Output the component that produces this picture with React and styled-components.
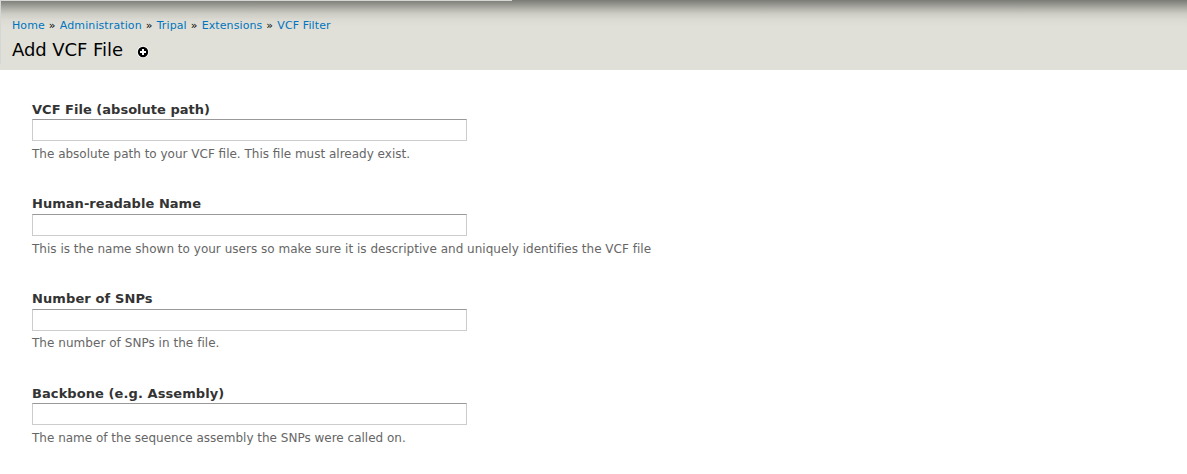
import React from "react";
import styled, { createGlobalStyle } from "styled-components";

const Global = createGlobalStyle`
  body { margin: 0; background: #fff; font-family: "DejaVu Sans", sans-serif; overflow: hidden; }
`;

const Header = styled.header`
  position: relative;
  height: 70px;
  box-sizing: border-box;
  padding: 18px 12px 0;
  background: linear-gradient(to bottom, #7b7b76 0, #93938d 4px, #b3b3ac 9px, #cdcdc6 14px, #dbdbd3 20px, #e0e0d8 27px);

  &::before {
    content: "";
    position: absolute;
    top: 0;
    left: 0;
    width: 511px;
    height: 63px;
    border: solid #d6d6d4;
    border-width: 1px 0 0 1px;
  }
`;

const Crumbs = styled.nav`
  position: relative;
  font-size: 11px;
  line-height: 16px;
  letter-spacing: 0.4px;
  white-space: pre;
  color: #000;
`;

const Crumb = styled.a`
  letter-spacing: 0.1px;
  color: #0074bd;
`;

const TitleRow = styled.div`
  display: flex;
  align-items: center;
  gap: 14px;
  margin-top: 4px;
`;

const Title = styled.h1`
  margin: 0;
  font-size: 18px;
  font-weight: normal;
  line-height: 24px;
  letter-spacing: -0.06px;
  color: #000;
`;

const AddIcon = styled.svg`
  display: block;
  margin-top: 3px;
`;

const Form = styled.form`
  display: flex;
  flex-direction: column;
  padding: 29.65px 32px 0;
`;

const Field = styled.div`
  display: flex;
  flex-direction: column;
  height: 94.67px;
`;

const Label = styled.label`
  margin-bottom: 0.7px;
  font-size: 13px;
  font-weight: bold;
  line-height: 19px;
  letter-spacing: ${(p) => p.$tracking}px;
  color: #333;
`;

const Input = styled.input`
  box-sizing: border-box;
  width: 435px;
  height: 22px;
  padding: 2px;
  border: 1px solid #ccc;
  border-top-color: #999;
  background: #fff;
`;

const Help = styled.div`
  margin-top: 2.65px;
  font-size: 12px;
  line-height: 20px;
  letter-spacing: ${(p) => p.$tracking}px;
  color: #666;
`;

const trail = ["Home", "Administration", "Tripal", "Extensions", "VCF Filter"];

const fields = [
  { label: "VCF File (absolute path)", help: "The absolute path to your VCF file. This file must already exist.", labelTracking: 0.02, helpTracking: 0 },
  { label: "Human-readable Name", help: "This is the name shown to your users so make sure it is descriptive and uniquely identifies the VCF file", labelTracking: 0.04, helpTracking: 0.015 },
  { label: "Number of SNPs", help: "The number of SNPs in the file.", labelTracking: 0.11, helpTracking: 0.04 },
  { label: "Backbone (e.g. Assembly)", help: "The name of the sequence assembly the SNPs were called on.", labelTracking: 0.08, helpTracking: 0 },
];

export default function App() {
  return (
    <>
      <Global />
      <Header>
        <Crumbs>
          {trail.map((name, i) => (
            <React.Fragment key={name}>
              {i > 0 && " » "}
              <Crumb>{name}</Crumb>
            </React.Fragment>
          ))}
        </Crumbs>
        <TitleRow>
          <Title>Add VCF File</Title>
          <AddIcon width="12" height="12" viewBox="0 0 12 12">
            <circle cx="6" cy="6" r="6" fill="#fff" />
            <circle cx="6" cy="6" r="5.2" fill="#000" />
            <path d="M6 3v6M3 6h6" stroke="#fff" strokeWidth="2" />
          </AddIcon>
        </TitleRow>
      </Header>
      <Form>
        {fields.map((f) => (
          <Field key={f.label}>
            <Label $tracking={f.labelTracking}>{f.label}</Label>
            <Input type="text" />
            <Help $tracking={f.helpTracking}>{f.help}</Help>
          </Field>
        ))}
      </Form>
    </>
  );
}
